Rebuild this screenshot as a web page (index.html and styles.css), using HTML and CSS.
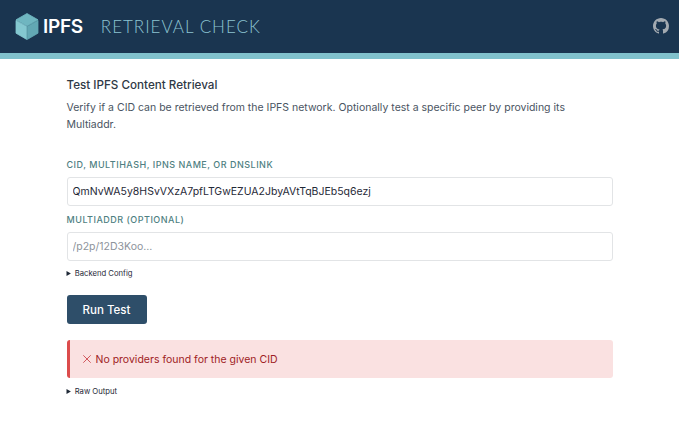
FILE: index.html
```html
<!DOCTYPE html>
<html lang="en">
<head>
  <title>IPFS Retrieval Check</title>
  <meta charset="UTF-8">
  <meta name="viewport" content="width=device-width, initial-scale=1.0">
  <link rel="stylesheet" href="styles.css">
</head>
<body>
  <header class="header">
    <div class="brand">
      <svg class="logo" viewBox="0 0 24 27" width="24" height="27">
        <polygon points="12,0.5 23,6.8 12,13 1,6.8" fill="#6fb6c0" stroke="#6fb6c0" stroke-width="0.8" stroke-linejoin="round"/>
        <polygon points="1,7.4 11.7,13.5 11.7,26.4 1,20.2" fill="#84c8d0" stroke="#84c8d0" stroke-width="0.8" stroke-linejoin="round"/>
        <polygon points="23,7.4 12.3,13.5 12.3,26.4 23,20.2" fill="#62a8b4" stroke="#62a8b4" stroke-width="0.8" stroke-linejoin="round"/>
      </svg>
      <span class="logo-text">IPFS</span>
      <span class="app-name">RETRIEVAL CHECK</span>
    </div>
    <a class="github" href="#" aria-label="GitHub">
      <svg viewBox="0 0 16 16" width="16" height="16">
        <path fill="#a3aab1" d="M8 0C3.58 0 0 3.58 0 8c0 3.54 2.29 6.53 5.47 7.59.4.07.55-.17.55-.38 0-.19-.01-.82-.01-1.49-2.01.37-2.53-.49-2.69-.94-.09-.23-.48-.94-.82-1.13-.28-.15-.68-.52-.01-.53.63-.01 1.08.58 1.23.82.72 1.21 1.87.87 2.33.66.07-.52.28-.87.51-1.07-1.78-.2-3.64-.89-3.64-3.95 0-.87.31-1.59.82-2.15-.08-.2-.36-1.02.08-2.12 0 0 .67-.21 2.2.82.64-.18 1.32-.27 2-.27s1.36.09 2 .27c1.53-1.04 2.2-.82 2.2-.82.44 1.1.16 1.92.08 2.12.51.56.82 1.27.82 2.15 0 3.07-1.87 3.75-3.65 3.95.29.25.54.73.54 1.48 0 1.07-.01 1.93-.01 2.2 0 .21.15.46.55.38A8.01 8.01 0 0 0 16 8c0-4.42-3.58-8-8-8z"/>
      </svg>
    </a>
  </header>

  <main class="container">
    <h1 class="title">Test IPFS Content Retrieval</h1>
    <p class="intro">Verify if a CID can be retrieved from the IPFS network. Optionally test a specific peer by providing its Multiaddr.</p>

    <form class="form">
      <label class="field-label" for="cid">CID, Multihash, IPNS Name, or DNSLink</label>
      <input class="field-input" id="cid" type="text" value="QmNvWA5y8HSvVXzA7pfLTGwEZUA2JbyAVtTqBJEb5q6ezj">
      <label class="field-label second" for="multiaddr">Multiaddr (optional)</label>
      <input class="field-input" id="multiaddr" type="text" placeholder="/p2p/12D3Koo...">
      <details class="toggle">
        <summary>Backend Config</summary>
      </details>
      <button class="run-btn" type="button">Run Test</button>
    </form>

    <div class="alert">
      <svg class="alert-icon" viewBox="0 0 8 8" width="8" height="8">
        <path d="M0.3 0.3L7.7 7.7M7.7 0.3L0.3 7.7" stroke="#c6333a" stroke-width="0.8" fill="none"/>
      </svg>
      <span>No providers found for the given CID</span>
    </div>

    <details class="toggle">
      <summary>Raw Output</summary>
    </details>
  </main>
</body>
</html>
```

FILE: styles.css
```css
body {
  font-family: Inter, "Liberation Sans", sans-serif;
  background: #fff;
  color: #374151;
  margin: 0;
  padding: 0;
}
.header {
  background: #1a3550;
  border-bottom: 6px solid #80c1cc;
  height: 53px;
  padding: 0 10px 0 15px;
  display: flex;
  justify-content: space-between;
  align-items: center;
}
.brand {
  display: flex;
  align-items: center;
}
.logo {
  display: block;
}
.logo-text {
  color: #fff;
  font-size: 19px;
  font-weight: 600;
  letter-spacing: -0.3px;
  margin-left: 4px;
}
.app-name {
  color: #8cc4d2;
  font-family: Lato, sans-serif;
  font-size: 17px;
  font-weight: 300;
  letter-spacing: 1px;
  margin-left: 18px;
}
.github {
  display: block;
  height: 16px;
  margin-bottom: 1px;
}
.container {
  width: 546px;
  margin: 0 auto;
  padding-top: 18px;
}
.title {
  font-size: 11.65px;
  font-weight: 500;
  line-height: 16px;
  color: #2f3946;
  margin: 0;
}
.intro {
  font-size: 10.5px;
  line-height: 17px;
  margin: 6px 0 0;
  color: #4a5462;
}
.form {
  margin-top: 26px;
}
.field-label {
  display: block;
  font-size: 9px;
  font-weight: 500;
  line-height: 12px;
  letter-spacing: 0.5px;
  text-transform: uppercase;
  color: #4f7f82;
  margin-bottom: 6px;
}
.field-label.second {
  margin-top: 8px;
}
.field-input {
  display: block;
  box-sizing: border-box;
  width: 100%;
  height: 29px;
  padding: 0 5px;
  border: 1px solid #e2e4e6;
  border-radius: 3px;
  font-family: inherit;
  font-size: 10.5px;
  color: #1f2937;
  background: #fff;
}
.field-input::placeholder {
  color: #8d939b;
}
.toggle {
  font-size: 7.7px;
  line-height: 12px;
  color: #1f2937;
}
.form .toggle {
  margin-top: 7px;
}
.run-btn {
  display: block;
  width: 80px;
  height: 29px;
  margin-top: 15px;
  background: #2e4e69;
  color: #fff;
  border: none;
  border-radius: 3px;
  font-family: inherit;
  font-size: 11.5px;
  font-weight: 500;
}
.alert {
  margin-top: 16px;
  height: 38px;
  box-sizing: border-box;
  display: flex;
  align-items: center;
  gap: 5px;
  padding-left: 13px;
  background: #fae1e1;
  border-left: 3px solid #dc4c4c;
  border-radius: 3px;
  color: #9f1c24;
  font-size: 10.5px;
}
.alert-icon {
  display: block;
}
.alert + .toggle {
  margin-top: 8px;
}
```
